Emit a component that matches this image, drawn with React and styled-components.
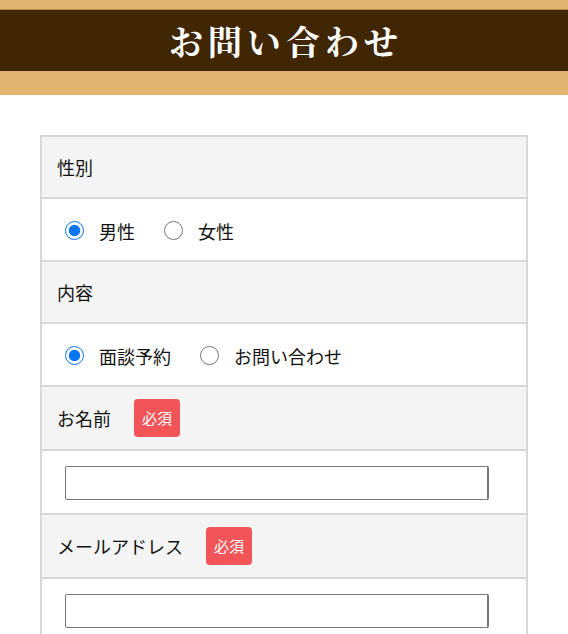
import React from 'react';
import styled, { createGlobalStyle } from 'styled-components';

const GlobalStyle = createGlobalStyle`
    body {
        margin:0;
        background:#fff;
        font-family:"Noto Sans CJK JP", "Liberation Sans", sans-serif;
        color:#111;
    }
`

const Banner = styled.header`
    background:#e2b36e;
    padding:9px 0 24px;
`
const TitleBar = styled.div`
    background:#402603;
    border-top:1px solid #b58a4e;
    height:61px;
    display:flex;
    align-items:center;
    justify-content:center;
`
const Title = styled.h1`
    margin:0;
    color:#fff;
    font-family:"Noto Serif CJK JP", "Liberation Serif", "Noto Sans CJK JP", serif;
    font-weight:700;
    font-size:34px;
    letter-spacing:5px;
    padding-left:4px;
`

const Form = styled.form`
    margin:40px 40px 0;
    width:488px;
    box-sizing:border-box;
    border:2px solid #d8d8d8;
    border-bottom:none;
`

const HeadRow = styled.div`
    display:flex;
    align-items:center;
    gap:23px;
    background:#f4f4f4;
    padding:12px 15px;
    min-height:36px;
    border-bottom:2px solid #d8d8d8;
    font-size:18px;
`

const Badge = styled.span`
    background:#f25558;
    color:#fff;
    font-size:15px;
    line-height:20px;
    padding:9px 8px;
    border-radius:4px;
`

const BodyRow = styled.div`
    display:flex;
    align-items:center;
    padding:15px 23px 13px;
    min-height:33px;
    border-bottom:2px solid #d8d8d8;
    font-size:18px;
`

const Choice = styled.label`
    display:flex;
    align-items:center;
    gap:15px;
    margin-right:29px;
`

const Radio = styled.input`
    width:19px;
    height:19px;
    margin:0;
    accent-color:#0a75f5;
`

const TextInput = styled.input`
    width:424px;
    height:34px;
    box-sizing:border-box;
    border:1px solid #767676;
    border-right-width:2px;
    border-radius:2px;
    font-size:16px;
`

const fields = [
    { label:'性別', type:'radio', name:'sex', options:['男性','女性'] },
    { label:'内容', type:'radio', name:'kind', options:['面談予約','お問い合わせ'] },
    { label:'お名前', type:'text', required:true },
    { label:'メールアドレス', type:'email', required:true },
];

export default function App() {
    return (
        <>
            <GlobalStyle />
            <Banner>
                <TitleBar>
                    <Title>お問い合わせ</Title>
                </TitleBar>
            </Banner>
            <Form>
                {fields.map(f => (
                    <React.Fragment key={f.label}>
                        <HeadRow>
                            <span>{f.label}</span>
                            {f.required && <Badge>必須</Badge>}
                        </HeadRow>
                        <BodyRow>
                            {f.type === 'radio'
                                ? f.options.map((o, i) => (
                                    <Choice key={o}>
                                        <Radio type="radio" name={f.name} defaultChecked={i === 0} />
                                        {o}
                                    </Choice>
                                ))
                                : <TextInput type={f.type} />}
                        </BodyRow>
                    </React.Fragment>
                ))}
            </Form>
        </>
    );
}
